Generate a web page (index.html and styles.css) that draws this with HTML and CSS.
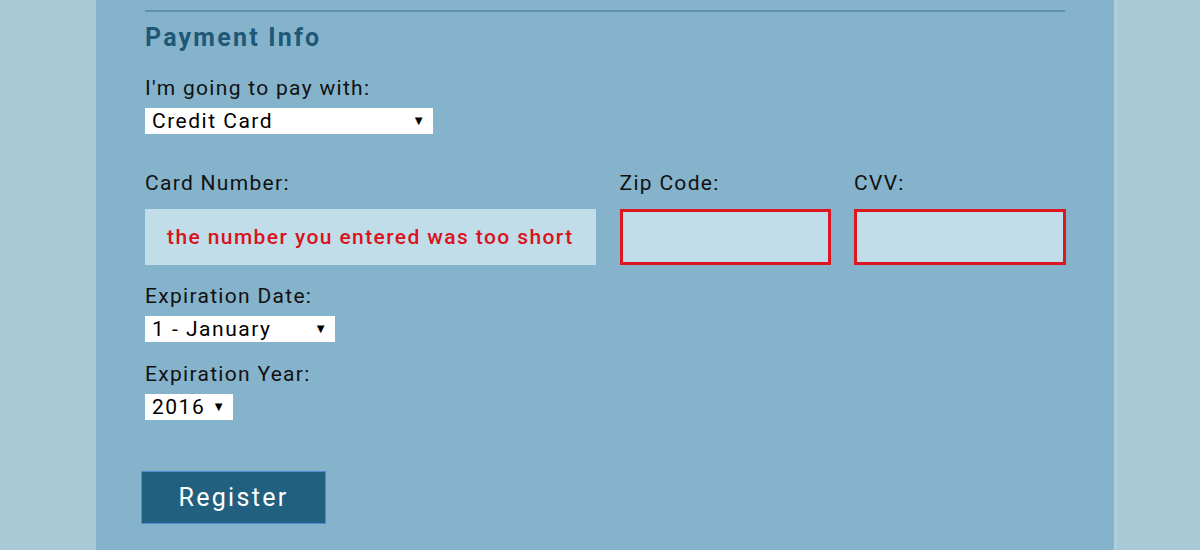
FILE: index.html
```html
<!DOCTYPE html>
<html lang="en">
<head>
<meta charset="utf-8">
<title>Payment Info</title>
<link rel="stylesheet" href="styles.css">
</head>
<body>
<main class="panel">
  <hr class="rule">
  <h2 class="heading">Payment Info</h2>
  <label class="label" for="payment">I'm going to pay with:</label>
  <div class="select select-pay">
    <select id="payment"><option>Credit Card</option></select>
  </div>

  <div class="card-row">
    <div class="field">
      <label class="label" for="cc">Card Number:</label>
      <div class="box box-msg" id="cc">the number you entered was too short</div>
    </div>
    <div class="field">
      <label class="label" for="zip">Zip Code:</label>
      <input class="box box-error" id="zip" type="text">
    </div>
    <div class="field">
      <label class="label" for="cvv">CVV:</label>
      <input class="box box-error" id="cvv" type="text">
    </div>
  </div>

  <label class="label label-exp" for="month">Expiration Date:</label>
  <div class="select select-month">
    <select id="month"><option>1 - January</option></select>
  </div>
  <label class="label label-year" for="year">Expiration Year:</label>
  <div class="select select-year">
    <select id="year"><option>2016</option></select>
  </div>

  <button class="register" type="submit">Register</button>
</main>
</body>
</html>
```

FILE: styles.css
```css
html, body {
  margin: 0;
  padding: 0;
}
body {
  background: #a9c9d6;
  font-family: Roboto, "Liberation Sans", sans-serif;
  height: 550px;
  overflow: hidden;
}
.panel {
  margin-left: 96px;
  width: 920px;
  height: 550px;
  padding: 10px 49px 0 49px;
  box-sizing: content-box;
  background: #85b3cb;
  border-right: 3px solid #aed0dd;
  display: flex;
  flex-direction: column;
  align-items: flex-start;
}
.rule {
  width: 100%;
  margin: 0;
  border: 0;
  height: 2px;
  background: #5e90a9;
}
.heading {
  margin: 11px 0 0 0;
  font-size: 25px;
  line-height: 30px;
  font-weight: 700;
  letter-spacing: 2.2px;
  color: #1f5877;
}
.label {
  display: block;
  font-size: 21px;
  line-height: 24px;
  letter-spacing: 1.3px;
  color: #111;
  margin-top: 23px;
}
.select {
  position: relative;
  margin-top: 8px;
  height: 26px;
  background: #fff;
}
.select select {
  appearance: none;
  -webkit-appearance: none;
  border: 0;
  background: transparent;
  width: 100%;
  height: 26px;
  padding: 0 0 0 7px;
  margin: 0;
  font-family: Roboto, "Liberation Sans", sans-serif;
  font-size: 21px;
  letter-spacing: 1.5px;
  color: #000;
}
.select::after {
  content: "\25BC";
  position: absolute;
  right: 8px;
  top: 5px;
  font-size: 13px;
  line-height: 15px;
  color: #000;
  pointer-events: none;
}
.select-pay { width: 288px; }
.select-month { width: 190px; }
.select-year { width: 88px; }

.card-row {
  width: 921px;
  margin-top: 37px;
  display: grid;
  grid-template-columns: 451px 211px 212px;
  column-gap: 23.5px;
}
.card-row .label { margin-top: 0; }
.field { display: flex; flex-direction: column; }
.box {
  margin-top: 14px;
  height: 56px;
  box-sizing: border-box;
  background: #c0dde9;
  width: 100%;
}
.box-msg {
  display: flex;
  align-items: center;
  padding-left: 22px;
  color: #d9121c;
  font-size: 21px;
  font-weight: 500;
  letter-spacing: 1.4px;
}
.box-error {
  border: 3px solid #dd1620;
  padding: 0;
  margin-left: 0;
  font: inherit;
}
.label-exp { margin-top: 19px; }
.label-year { margin-top: 20px; }

.register {
  margin-top: 51px;
  margin-left: -4px;
  width: 185px;
  height: 53px;
  background: #22607f;
  border: 1px solid #4d8fd6;
  color: #fff;
  font-family: Roboto, "Liberation Sans", sans-serif;
  font-size: 25px;
  letter-spacing: 2.3px;
  padding: 0;
}
```
